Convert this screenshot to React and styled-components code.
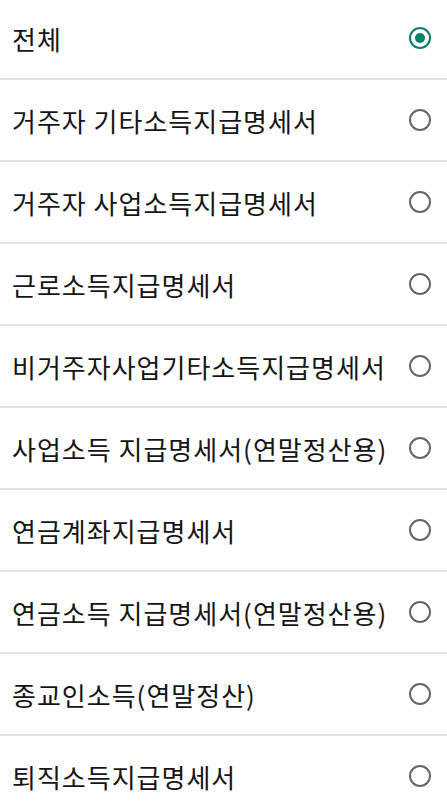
import React, { useState } from "react";
import styled, { createGlobalStyle } from "styled-components";

const items = [
  "전체",
  "거주자 기타소득지급명세서",
  "거주자 사업소득지급명세서",
  "근로소득지급명세서",
  "비거주자사업기타소득지급명세서",
  "사업소득 지급명세서(연말정산용)",
  "연금계좌지급명세서",
  "연금소득 지급명세서(연말정산용)",
  "종교인소득(연말정산)",
  "퇴직소득지급명세서",
];

const App = () => {
  const [selected, setSelected] = useState(0);
  return (
    <>
      <GlobalStyle />
      <List>
        {items.map((label, i) => (
          <Row key={label} onClick={() => setSelected(i)}>
            <Label>{label}</Label>
            <Radio $checked={selected === i} />
          </Row>
        ))}
      </List>
    </>
  );
};

export default App;
// =======================================================================
//                              STYLE
// =======================================================================
const GlobalStyle = createGlobalStyle`
  body {
    margin: 0;
    background: #ffffff;
    font-family: "Noto Sans CJK KR", "Noto Sans", sans-serif;
    overflow: hidden;
  }
`;

const List = styled.div`
  display: flex;
  flex-direction: column;
  margin-top: -2px;
`;

const Row = styled.div`
  box-sizing: border-box;
  height: 82px;
  flex-shrink: 0;
  display: flex;
  align-items: center;
  justify-content: space-between;
  padding: 0 16px 0 12px;
  border-bottom: 2px solid #e2e2e2;
  cursor: pointer;
`;

const Label = styled.span`
  font-size: 26px;
  letter-spacing: 1px;
  color: #151515;
  white-space: nowrap;
`;

const Radio = styled.span`
  box-sizing: border-box;
  width: 22px;
  height: 22px;
  flex-shrink: 0;
  border-radius: 50%;
  border: 2.4px solid ${(p) => (p.$checked ? "#0b7d6c" : "#666666")};
  display: flex;
  align-items: center;
  justify-content: center;
  &::after {
    content: "";
    width: 10px;
    height: 10px;
    border-radius: 50%;
    background: #0b7d6c;
    display: ${(p) => (p.$checked ? "block" : "none")};
  }
`;
